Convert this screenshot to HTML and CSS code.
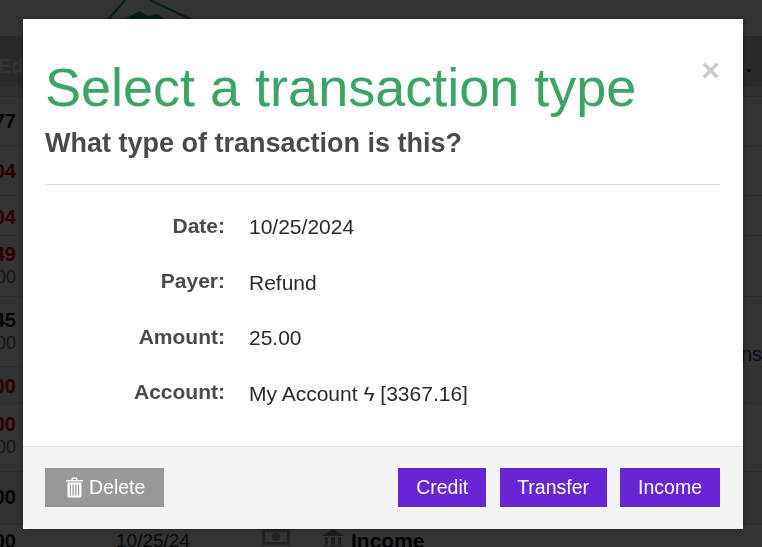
FILE: index.html
```html
<!DOCTYPE html>
<html lang="en">
<head>
<meta charset="utf-8">
<title>Select a transaction type</title>
<link rel="stylesheet" href="styles.css">
</head>
<body>
<div class="page">
  <header class="top">
    <svg class="logo" width="120" height="36" viewBox="0 0 120 36" fill="none" stroke="#1c9a55" stroke-width="2"><path d="M15 21 L33 0"/><path d="M58 0 L100 20"/><path d="M28 21 L48 11 L56 16 L66 14 L74 21 Z" fill="#1c9a55" stroke="none"/></svg>
  </header>
  <div class="row row-head"><div class="cut"><span class="head-text">Ed</span></div><div class="end dot">.</div></div>
  <div class="row r1"><div class="cut"><b class="num">77</b></div></div>
  <div class="row r2"><div class="cut"><b class="num red">04</b></div></div>
  <div class="row r3"><div class="cut"><b class="num red">04</b></div></div>
  <div class="row r4"><div class="cut stack"><b class="num red">49</b><span class="small">00</span></div></div>
  <div class="row r5"><div class="cut stack"><b class="num">45</b><span class="small">00</span></div><div class="end link">ns</div></div>
  <div class="row r6 zebra"><div class="cut"><b class="num red">00</b></div></div>
  <div class="row r7"><div class="cut stack"><b class="num red">00</b><span class="small">00</span></div></div>
  <div class="row r8 zebra"><div class="cut"><b class="num">00</b></div></div>
  <div class="row r9">
    <div class="cut"><b class="num">00</b></div>
    <span class="date">10/25/24</span>
    <svg class="money" width="28" height="20" viewBox="0 0 28 20" fill="#aaa"><path d="M0 2h28v16H0zM3 5v10h22V5z" fill-rule="evenodd"/><circle cx="14" cy="10" r="4"/></svg>
    <svg class="bank" width="20" height="20" viewBox="0 0 20 20" fill="#999"><path d="M10 0 L20 6 V7 H0 V6 Z"/><path d="M2 8h3v8H2zM8 8h4v8H8zM15 8h3v8h-3zM0 17h20v3H0z"/></svg>
    <b class="income">Income</b>
  </div>
</div>

<div class="overlay">
  <div class="modal">
    <span class="close">×</span>
    <div class="modal-head">
      <h1 class="title">Select a transaction type</h1>
      <h2 class="subtitle">What type of transaction is this?</h2>
    </div>
    <div class="details">
      <div class="field"><span class="label">Date:</span><span class="value">10/25/2024</span></div>
      <div class="field"><span class="label">Payer:</span><span class="value">Refund</span></div>
      <div class="field"><span class="label">Amount:</span><span class="value">25.00</span></div>
      <div class="field"><span class="label">Account:</span><span class="value">My Account ϟ [3367.16]</span></div>
    </div>
    <div class="modal-foot">
      <button class="btn btn-delete" type="button">
        <svg class="trash" width="17" height="21" viewBox="0 0 17 21" fill="#fff"><path d="M5.500 3 V1.500 Q5.500 .5 6.500 .5 H10.500 Q11.500 .5 11.500 1.500 V3 H17 V4.500 H0 V3 Z M6.800 3 H10.200 V1.800 H6.800 Z" fill-rule="evenodd"/><path d="M1.500 5.500 H15.500 V19 Q15.500 20.500 14 20.500 H3 Q1.500 20.500 1.500 19 Z M3.800 7.500 V18.500 H5 V7.500 Z M6.500 7.500 V18.500 H7.800 V7.500 Z M9.200 7.500 V18.500 H10.500 V7.500 Z M12 7.500 V18.500 H13.200 V7.500 Z" fill-rule="evenodd"/></svg>
        Delete
      </button>
      <div class="actions">
        <button class="btn btn-primary" type="button">Credit</button>
        <button class="btn btn-primary btn-transfer" type="button">Transfer</button>
        <button class="btn btn-primary" type="button">Income</button>
      </div>
    </div>
  </div>
</div>
</body>
</html>
```
FILE: styles.css
```css
* { box-sizing: border-box; }
html, body { margin: 0; height: 100%; }
body {
  font-family: "Liberation Sans", Arial, sans-serif;
  background: #fff;
  color: #222;
  overflow: hidden;
}

/* page behind the dialog */
.page { height: 547px; overflow: hidden; }
.top { height: 36px; }
.logo { display: block; margin-left: 92px; }
.row {
  display: flex;
  align-items: center;
  border-bottom: 1px solid #ddd;
}
.cut {
  width: 16px;
  flex: none;
  display: flex;
  justify-content: flex-end;
  white-space: nowrap;
}
.stack { flex-direction: column; align-items: flex-end; }
.num { font-size: 20px; line-height: 23px; color: #222; }
.red { color: #e00000; }
.small { font-size: 18px; line-height: 23px; color: #666; }
.row-head { height: 61px; background: linear-gradient(#ccc 0, #ccc 84%, #eee 84%); padding-bottom: 2px; }
.row-head .cut { width: 23px; justify-content: flex-start; }
.head-text { font-size: 20px; font-weight: 700; color: #fff; margin: 2px 0 0 -2px; }
.end { margin-left: auto; font-size: 20px; white-space: nowrap; width: 19px; display: flex; }
.dot { color: #111; font-weight: 700; padding-left: 3px; }
.link { color: #5a20c8; justify-content: flex-end; align-self: flex-end; line-height: 23px; }
.r1 { height: 50px; }
.r2 { height: 49px; }
.r3 { height: 40px; padding-top: 4px; }
.r4 { height: 61px; }
.r5 { height: 70px; }
.r6 { height: 37px; padding-top: 3px; }
.r7 { height: 68px; padding-bottom: 3px; }
.r8 { height: 53px; padding-bottom: 2px; }
.r9 { height: 40px; align-items: flex-start; padding-top: 5px; }
.zebra { background: #f6f6f6; }
.date { font-size: 19px; color: #333; margin-left: 100px; line-height: 22px; }
.money { margin-left: 72px; margin-top: -3px; }
.bank { margin-left: 33px; margin-top: -1px; }
.income { font-size: 21px; color: #111; margin-left: 8px; line-height: 22px; }

/* dialog */
.overlay {
  position: fixed;
  inset: 0;
  background: rgba(0, 0, 0, .8);
  padding: 19px 19px 18px 23px;
  display: flex;
}
.modal {
  position: relative;
  flex: 1;
  background: #fff;
  display: flex;
  flex-direction: column;
  box-shadow: 0 0 6px rgba(0, 0, 0, .4);
}
.close {
  position: absolute;
  top: 31px;
  right: 23px;
  font-size: 32px;
  line-height: 40px;
  font-weight: 700;
  color: #ccc;
}
.modal-head {
  margin: 0 23px 0 22px;
  height: 166px;
  padding-top: 35px;
  border-bottom: 1px solid #ddd;
}
.title {
  margin: 0;
  font-size: 54px;
  line-height: 66px;
  font-weight: 400;
  color: #3aa566;
}
.subtitle {
  margin: 5px 0 0;
  font-size: 27px;
  line-height: 36px;
  font-weight: 700;
  color: #4a4a4a;
}
.details {
  flex: 1;
  display: flex;
  flex-direction: column;
  gap: 19.500px;
  padding: 24px 23px 0 22px;
}
.field { display: flex; gap: 24px; height: 36px; align-items: center; }
.label {
  width: 180px;
  text-align: right;
  font-size: 21px;
  font-weight: 700;
  color: #4a4a4a;
  margin-top: -3px;
}
.value { font-size: 21px; color: #2a2a2a; }
.modal-foot {
  height: 83px;
  background: #f4f4f4;
  border-top: 1px solid #ddd;
  border-radius: 0 0 6px 6px;
  padding: 21px 23px 22px 22px;
  display: flex;
  justify-content: space-between;
}
.actions { display: flex; gap: 13.500px; }
.btn {
  height: 39px;
  border: 0;
  padding: 0 18px;
  font: 19.500px "Liberation Sans", Arial, sans-serif;
  color: #fff;
  display: flex;
  align-items: center;
}
.btn-primary { background: #6825d6; }
.btn-transfer { padding: 0 17.500px; }
.btn-delete { background: #999; width: 119px; padding: 0 0 0 21px; gap: 6px; }
```
